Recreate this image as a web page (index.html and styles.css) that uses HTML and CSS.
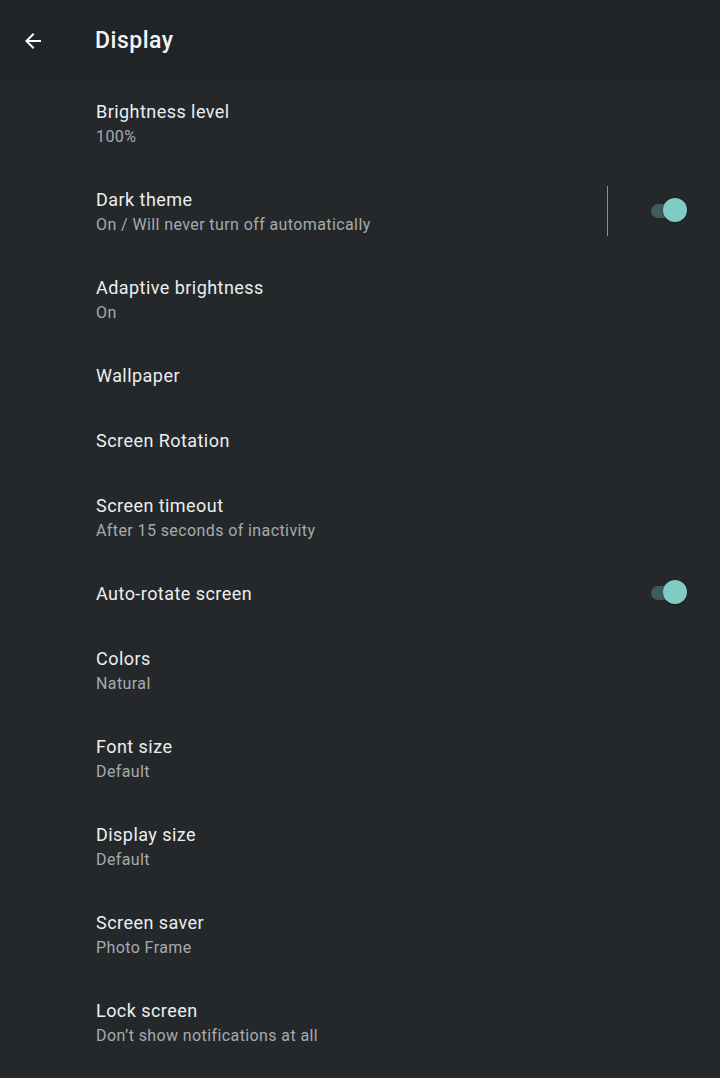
FILE: index.html
```html
<!DOCTYPE html>
<html lang="en">
<head>
    <meta charset="UTF-8">
    <meta name="viewport" content="width=device-width, initial-scale=1.0">
    <title>Display</title>
    <link rel="stylesheet" href="styles.css">
</head>
<body>
    <div class="header">
        <button class="back-btn" aria-label="Back">
            <svg width="24" height="24" viewBox="0 0 24 24"><path fill="#fff" d="M20 11H7.83l5.59-5.59L12 4l-8 8 8 8 1.41-1.41L7.83 13H20v-2z"/></svg>
        </button>
        <div class="header-title">Display</div>
    </div>

    <div class="list">
        <div class="item">
            <div class="item-text">
                <div class="item-title">Brightness level</div>
                <div class="item-summary">100%</div>
            </div>
        </div>
        <div class="item">
            <div class="item-text">
                <div class="item-title">Dark theme</div>
                <div class="item-summary">On / Will never turn off automatically</div>
            </div>
            <div class="divider"></div>
            <div class="switch on"><div class="track"></div><div class="thumb"></div></div>
        </div>
        <div class="item">
            <div class="item-text">
                <div class="item-title">Adaptive brightness</div>
                <div class="item-summary">On</div>
            </div>
        </div>
        <div class="item single">
            <div class="item-text">
                <div class="item-title">Wallpaper</div>
            </div>
        </div>
        <div class="item single">
            <div class="item-text">
                <div class="item-title">Screen Rotation</div>
            </div>
        </div>
        <div class="item">
            <div class="item-text">
                <div class="item-title">Screen timeout</div>
                <div class="item-summary">After 15 seconds of inactivity</div>
            </div>
        </div>
        <div class="item single">
            <div class="item-text">
                <div class="item-title">Auto-rotate screen</div>
            </div>
            <div class="switch on"><div class="track"></div><div class="thumb"></div></div>
        </div>
        <div class="item">
            <div class="item-text">
                <div class="item-title">Colors</div>
                <div class="item-summary">Natural</div>
            </div>
        </div>
        <div class="item">
            <div class="item-text">
                <div class="item-title">Font size</div>
                <div class="item-summary">Default</div>
            </div>
        </div>
        <div class="item">
            <div class="item-text">
                <div class="item-title">Display size</div>
                <div class="item-summary">Default</div>
            </div>
        </div>
        <div class="item">
            <div class="item-text">
                <div class="item-title">Screen saver</div>
                <div class="item-summary">Photo Frame</div>
            </div>
        </div>
        <div class="item">
            <div class="item-text">
                <div class="item-title">Lock screen</div>
                <div class="item-summary">Don’t show notifications at all</div>
            </div>
        </div>
    </div>
</body>
</html>
```

FILE: styles.css
```css
body {
    margin: 0;
    height: 100vh;
    overflow: hidden;
    background: #24282b;
    color: #fff;
    font-family: Roboto, "Noto Sans", sans-serif;
}

.header {
    height: 79px;
    display: flex;
    align-items: center;
    background: #212427;
    box-shadow: 0 1px 2px rgba(0, 0, 0, 0.25);
    position: relative;
}

.back-btn {
    width: 24px;
    height: 24px;
    margin-left: 21px;
    margin-top: 2px;
    padding: 0;
    border: none;
    background: none;
    display: flex;
}

.back-btn svg {
    width: 26px;
    height: 26px;
    margin: -1px 0 0 0;
}

.header-title {
    margin-left: 50px;
    margin-top: 2px;
    font-size: 23px;
    font-weight: 500;
    color: #f4f4f4;
    letter-spacing: 0.5px;
}

.list {
    display: flex;
    flex-direction: column;
}

.item {
    height: 88px;
    display: flex;
    align-items: center;
    padding-left: 96px;
    padding-right: 32px;
    padding-top: 2px;
    box-sizing: border-box;
}

.item.single {
    height: 65px;
    padding-top: 0;
}

.item-text {
    flex-grow: 1;
    display: flex;
    flex-direction: column;
    gap: 2px;
}

.item-title {
    font-size: 18px;
    line-height: 24px;
    color: #eceeef;
    letter-spacing: 0.45px;
}

.item-summary {
    font-size: 16px;
    line-height: 22px;
    color: #a6aaad;
    letter-spacing: 0.4px;
}

.divider {
    width: 1px;
    height: 50px;
    background: #8c9094;
    margin-right: 40px;
    margin-bottom: 2px;
}

.switch {
    width: 38px;
    height: 26px;
    position: relative;
    margin-left: 2px;
    margin-bottom: 2px;
}

.switch .track {
    position: absolute;
    left: 1px;
    top: 6px;
    width: 34px;
    height: 14px;
    border-radius: 7px;
    background: #3f5c5a;
}

.switch .thumb {
    position: absolute;
    left: 13px;
    top: 0;
    width: 24px;
    height: 24px;
    border-radius: 50%;
    background: #80cbc4;
    box-shadow: 0 1px 2px rgba(0, 0, 0, 0.3);
}
```
